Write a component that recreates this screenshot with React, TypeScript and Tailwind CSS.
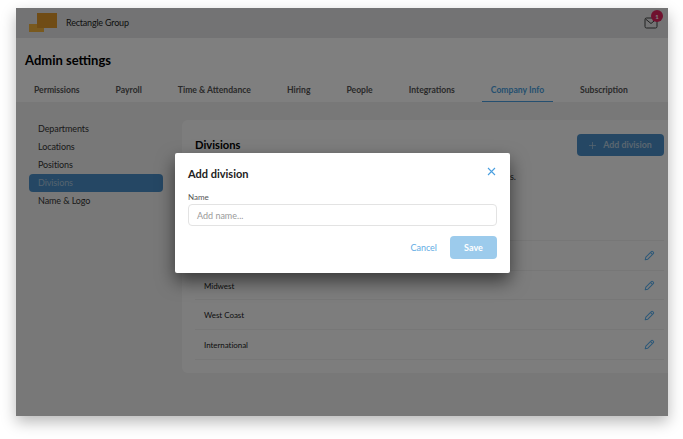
import React from "react";

const tabs = ["Permissions", "Payroll", "Time & Attendance", "Hiring", "People", "Integrations", "Company Info", "Subscription"];
const side = ["Departments", "Locations", "Positions", "Divisions", "Name & Logo"];
const rows = ["East Coast", "Midwest", "West Coast", "International"];

function Pencil() {
  return (
    <svg width="11" height="11" viewBox="0 0 12 12" fill="none" stroke="#5ab0f0" strokeWidth="1.1" strokeLinejoin="round">
      <path d="M1.3 10.7l.7-2.9 6-6a1.1 1.1 0 0 1 1.6 0l.6.6a1.1 1.1 0 0 1 0 1.6l-6 6z" />
      <path d="M7.2 2.8l2 2" />
    </svg>
  );
}

export default function App() {
  return (
    <div className="h-[439px] w-[683px] overflow-hidden bg-white pl-4 pt-2 font-['Lato',sans-serif]">
      <div className="relative flex h-[408px] w-[652px] flex-col bg-white shadow-[0_6px_14px_rgba(0,0,0,0.28)]">
        <header className="flex h-[30px] items-center justify-between bg-[#e6e7e8] pl-[13px] pr-[10px]">
          <div className="flex items-center">
            <svg width="29" height="20" viewBox="0 0 29 20" className="mr-[8px]">
              <rect x="0" y="11" width="15" height="8" fill="#f2b33d" />
              <rect x="8" y="0" width="20" height="15" fill="#e0992a" />
            </svg>
            <span className="text-[9px] tracking-[-0.2px] text-[#222]">Rectangle Group</span>
          </div>
          <div className="relative h-[14px] w-[14px]">
            <svg width="14" height="13" viewBox="0 0 14 13" fill="none" stroke="#444" strokeWidth="1" className="absolute left-0 top-[1px]">
              <rect x="1" y="1" width="12" height="10" rx="1.5" />
              <path d="M1.5 2l5.5 4.5L12.5 2" />
            </svg>
            <span className="absolute -right-[5px] -top-[6px] flex h-[12px] w-[12px] items-center justify-center rounded-full bg-[#e0245e] text-[6px] font-bold text-white">1</span>
          </div>
        </header>

        <div className="bg-white px-[9px]">
          <h1 className="pb-[7px] pt-[13px] text-[13px] font-bold leading-[18px] text-black">Admin settings</h1>
          <nav className="flex gap-[18px]">
            {tabs.map((t) => (
              <div
                key={t}
                className={
                  "flex h-[26px] items-center whitespace-nowrap border-b px-[9px] pt-[3px] text-[8.6px] font-bold " +
                  (t === "Company Info" ? "border-[#4a9fe0] text-[#4a9fe0]" : "border-transparent text-[#555]")
                }
              >
                {t}
              </div>
            ))}
          </nav>
        </div>

        <div className="flex flex-1 flex-col bg-[#f1f1f1] pt-[18px]">
          <div className="flex">
            <aside className="ml-[13px] mr-[19px] w-[134px]">
              <ul>
                {side.map((s) => (
                  <li
                    key={s}
                    className={
                      "flex h-[18px] items-center rounded-sm pl-[9px] text-[9px] tracking-[-0.1px] " +
                      (s === "Divisions" ? "bg-[#4a8fc8] text-[#a9c6de]" : "text-[#333]")
                    }
                  >
                    {s}
                  </li>
                ))}
              </ul>
            </aside>
            <main className="h-[253px] flex-1 rounded-l-md bg-[#fbfbfb] pl-[13px] pr-[4px] pt-[14px]">
              <div className="flex items-start justify-between">
                <h2 className="pt-[1px] text-[11.2px] font-bold leading-[20px] text-black">Divisions</h2>
                <button className="flex h-[22px] w-[87px] items-center justify-center gap-[7px] rounded-sm bg-[#4a8fc8] text-[8.8px] font-bold text-[#b5cde0]">
                  <svg width="7" height="7" viewBox="0 0 8 8" stroke="currentColor" strokeWidth="0.8"><path d="M4 0v8M0 4h8" /></svg>
                  Add division
                </button>
              </div>
              <p className="mt-[15px] pr-[148px] text-right text-[9px] leading-[12px] text-[#333]">s.</p>
              <div className="mt-[57px] border-t border-[#eeeeee]">
                {rows.map((r) => (
                  <div key={r} className="flex h-[29.7px] items-center justify-between border-b border-[#eeeeee] px-[9px] pt-[1px] text-[8px] tracking-[-0.05px] text-[#222]">
                    <span>{r}</span>
                    <Pencil />
                  </div>
                ))}
              </div>
            </main>
          </div>
        </div>

        <div className="absolute inset-0 flex items-start justify-center bg-black/50">
          <div className="ml-[1px] mt-[145px] h-[120px] w-[335px] rounded-[2px] bg-white px-[13px] shadow-[0_8px_18px_rgba(0,0,0,0.55)]">
            <div className="flex items-start justify-between pt-[13px]">
              <h3 className="text-[11px] font-bold leading-[16px] text-[#222]">Add division</h3>
              <svg width="9" height="9" viewBox="0 0 9 9" stroke="#4a9fe0" strokeWidth="1.1" className="mr-[1px] mt-[1px]">
                <path d="M1 1l7 7M8 1L1 8" />
              </svg>
            </div>
            <label className="mt-[9px] block text-[8px] leading-[12px] text-[#555]">Name</label>
            <div className="mt-[1px] flex h-[22px] items-center rounded-sm border border-[#e3e3e3] pl-[8px] pt-[1px] text-[9px] text-[#9a9a9a]">Add name...</div>
            <div className="mt-[10px] flex items-center justify-end gap-[13px]">
              <span className="text-[9px] text-[#62ace4]">Cancel</span>
              <button className="flex h-[23px] w-[47px] items-center justify-center rounded-sm bg-[#9ccbec] text-[9px] font-bold text-white">Save</button>
            </div>
          </div>
        </div>
      </div>
    </div>
  );
}
